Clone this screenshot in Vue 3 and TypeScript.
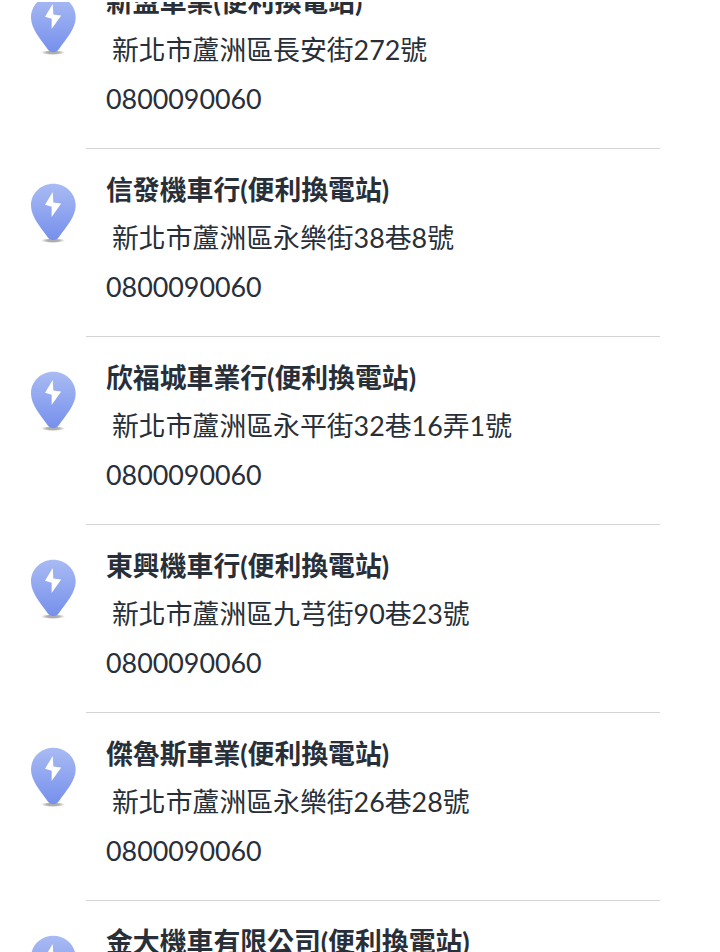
<script setup lang="ts">
interface Station {
  name: string
  address: string
  phone: string
}

const stations: Station[] = [
  { name: '新盟車業(便利換電站)', address: '新北市蘆洲區長安街272號', phone: '0800090060' },
  { name: '信發機車行(便利換電站)', address: '新北市蘆洲區永樂街38巷8號', phone: '0800090060' },
  { name: '欣福城車業行(便利換電站)', address: '新北市蘆洲區永平街32巷16弄1號', phone: '0800090060' },
  { name: '東興機車行(便利換電站)', address: '新北市蘆洲區九芎街90巷23號', phone: '0800090060' },
  { name: '傑魯斯車業(便利換電站)', address: '新北市蘆洲區永樂街26巷28號', phone: '0800090060' },
  { name: '金大機車有限公司(便利換電站)', address: '', phone: '' },
]
</script>

<template>
  <main class="viewport">
    <ul class="list">
      <li v-for="(s, i) in stations" :key="i" class="station">
        <svg class="pin" viewBox="0 0 50 64" aria-hidden="true">
          <defs>
            <linearGradient :id="`pin-${i}`" x1="0" y1="0" x2="0" y2="1">
              <stop offset="0" stop-color="#a9bbf3" />
              <stop offset="1" stop-color="#7690ec" />
            </linearGradient>
            <radialGradient :id="`shadow-${i}`">
              <stop offset="0.5" stop-color="#b0aeac" />
              <stop offset="1" stop-color="#b0aeac" stop-opacity="0" />
            </radialGradient>
          </defs>
          <ellipse cx="25" cy="57.500" rx="12" ry="2.500" :fill="`url(#shadow-${i})`" />
          <path d="M25.300 0.700C12.500 0.700 3 10.500 3 22.500C3 33.500 12 43.500 19.500 54C22.500 58.200 28 58.200 31 54C38.500 43.500 47.700 33.500 47.700 22.500C47.700 10.500 38 0.700 25.300 0.700Z" :fill="`url(#pin-${i})`" />
          <path d="M24.700 9L17 21.800L23.700 23.700L23.600 34L33.200 20.600L25.400 19.500Z" fill="#fff" />
        </svg>
        <div class="details">
          <h2 class="name">{{ s.name }}</h2>
          <p class="address">{{ s.address }}</p>
          <p class="phone">{{ s.phone }}</p>
        </div>
      </li>
    </ul>
  </main>
</template>

<style>
body {
  margin: 0;
  background: #fff;
}
</style>

<style scoped>
.viewport {
  box-sizing: border-box;
  height: 952px;
  border-top: 2px solid #fff;
  overflow: hidden;
  background: #fff;
  color: #282f38;
  font-family: Lato, "Noto Sans CJK TC", sans-serif;
}
.list {
  margin: -41px 0 0;
  padding: 0;
  list-style: none;
}
.station {
  display: flex;
  height: 188.100px;
}
.pin {
  flex: none;
  width: 50px;
  height: 64px;
  margin: 34px 8px 0 28px;
}
.details {
  box-sizing: border-box;
  width: 574px;
  padding: 17px 0 0 20px;
  border-bottom: 1px solid #d4d4d4;
}
.name,
.address,
.phone {
  margin: 0;
  height: 48px;
  line-height: 48px;
  font-size: 26.850px;
  font-weight: 400;
  white-space: nowrap;
}
.name {
  font-weight: 700;
}
.address {
  padding-left: 6px;
}
.phone {
  padding-top: 1px;
}
</style>
